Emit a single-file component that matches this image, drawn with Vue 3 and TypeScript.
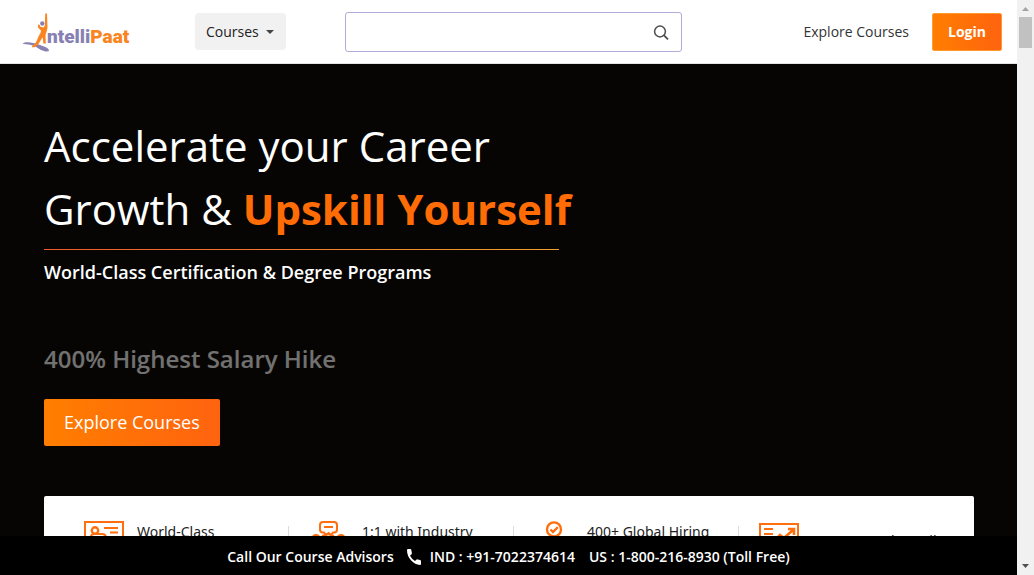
<script setup lang="ts">
import { ref } from 'vue'

interface Feature {
  icon: 'instructor' | 'mentor' | 'hiring' | 'growth'
  text: string
}

const query = ref('')

const features: Feature[] = [
  { icon: 'instructor', text: 'World-Class' },
  { icon: 'mentor', text: '1:1 with Industry' },
  { icon: 'hiring', text: '400+ Global Hiring' },
  { icon: 'growth', text: '55% Avg. Salary Hike' },
]
</script>

<template>
  <div class="viewport">
    <div class="page">
      <header class="topbar">
        <a href="#" class="logo" aria-label="IntelliPaat">
          <svg class="logo-art" width="110" height="42" viewBox="0 0 110 42">
            <path d="M0.500 32.500C4 30.300 11 31.600 16.500 33.600C21 35.200 26 36.500 27 39.200C27.300 41 22.500 40.600 19 38.900C15.500 37.100 13 34.800 9 34C5.500 33.300 2.500 33.400 0.500 32.500Z" fill="#8781b3" />
            <circle cx="20.300" cy="12.500" r="2.200" fill="#8781b3" />
            <path d="M23.200 2.500L25 2.500L25.500 16C25.300 19.500 24 21.500 23.500 24L23.800 32.500L21.300 32.500L20.800 26.500C18 29 17.800 33.500 12.500 36.300L9.800 36.200L10.300 34.700C15 32.800 15.500 26 18.400 22.200L19 19.500L15.800 16.300L16.300 13.300L17.800 14L18 15.400L21.500 16.400L22.900 14.500Z" fill="#f98420" />
            <text x="25" y="32" class="logo-text"><tspan fill="#8781b3">ntelli</tspan><tspan fill="#f98420">Paat</tspan></text>
          </svg>
        </a>
        <button type="button" class="courses">
          Courses
          <svg width="8" height="4" viewBox="0 0 8 4" aria-hidden="true"><path d="M0 0H8L4 4Z" fill="#444" /></svg>
        </button>
        <form class="search" role="search" @submit.prevent>
          <input v-model="query" type="text" aria-label="Search courses" />
          <button type="submit" aria-label="Search">
            <svg width="16" height="16" viewBox="0 0 16 16" fill="none" stroke="#4d4d4d" stroke-width="1.500">
              <circle cx="7" cy="7.500" r="5.400" />
              <path d="M11 11.400L15 15.400" stroke-width="1.800" />
            </svg>
          </button>
        </form>
        <a href="#" class="explore-link">Explore Courses</a>
        <button type="button" class="login">Login</button>
      </header>

      <main class="hero">
        <h1>Accelerate your Career<br />Growth &amp; <strong>Upskill Yourself</strong></h1>
        <div class="rule"></div>
        <h2>World-Class Certification &amp; Degree Programs</h2>
        <p class="stat">400% Highest Salary Hike</p>
        <a href="#" class="cta">Explore Courses</a>

        <ul class="features">
          <li v-for="f in features" :key="f.icon" :class="{ single: f.icon === 'growth' }">
            <svg v-if="f.icon === 'instructor'" width="40" height="40" viewBox="0 0 40 40" fill="none" stroke="#ff6f0f" stroke-width="2">
              <path d="M1 36V1H39V36Z" />
              <circle cx="11" cy="9.500" r="3.200" stroke-width="2.400" />
              <path d="M7 22V16Q7 13 10 13H18Q22 13 22 17V22M20 7H34M26 11.500H34M7 27H34" />
            </svg>
            <svg v-else-if="f.icon === 'mentor'" width="40" height="40" viewBox="0 0 40 40" fill="none" stroke="#ff6f0f" stroke-width="2">
              <path d="M14 1H25Q28 1 28 4V8.500Q28 11.500 25 11.500H24L22 14L19.500 12L17 14L15 11.500H14Q11 11.500 11 8.500V4Q11 1 14 1ZM15 6H24" />
              <circle cx="7" cy="18" r="4" />
              <circle cx="32" cy="18" r="4" />
              <path d="M13 15L19 13L25 15M2 36V30Q2 25 8 25Q14 25 14 30V36ZM26 36V30Q26 25 32 25Q38 25 38 30V36Z" />
            </svg>
            <svg v-else-if="f.icon === 'hiring'" width="40" height="40" viewBox="0 0 40 40" fill="none" stroke="#ff6f0f" stroke-width="2.400">
              <circle cx="20" cy="8.400" r="7" />
              <path d="M16.500 8.500L19 11L23.800 6.200M20 16V24M8 36V24H32V36" />
            </svg>
            <svg v-else width="40" height="34" viewBox="0 0 40 34" fill="none" stroke="#ff6f0f" stroke-width="2">
              <path d="M1 33V1H39V33Z M5 6H14M5 11H14M5 16H14" />
              <path d="M16 17L21 12L25 15L34 7M29 6H35V12" stroke-width="2.600" />
            </svg>
            <span>{{ f.text }}</span>
          </li>
        </ul>
      </main>

      <footer class="callbar">
        <span>Call Our Course Advisors</span>
        <svg width="14" height="16" viewBox="0 0 14 16" aria-hidden="true">
          <path d="M0 1Q0 0 1 0H3.300Q4.200 0 4.300 1L4.900 4.100Q5 4.800 4.500 5.200L3 6.800Q5 10.400 8 12L9.600 10.600Q10 10.200 10.700 10.400L13.200 11.100Q14 11.300 14 12.200V15Q14 16 13 16Q8 15.700 4.200 11.600Q0 7 0 1Z" fill="#fff" />
        </svg>
        <a href="tel:+917022374614">IND : +91-7022374614</a>
        <a href="tel:18002168930" class="us">US : 1-800-216-8930 (Toll Free)</a>
      </footer>
    </div>

    <div class="scrollbar" aria-hidden="true">
      <svg width="17" height="17" viewBox="0 0 17 17"><path d="M5 11H12L8.500 7Z" fill="#a3a3a3" /></svg>
      <div class="thumb"></div>
      <svg width="17" height="17" viewBox="0 0 17 17"><path d="M5 6H12L8.500 10Z" fill="#505050" /></svg>
    </div>
  </div>
</template>

<style>
body {
  margin: 0;
}
</style>

<style scoped>
* {
  box-sizing: border-box;
}
.viewport {
  display: flex;
  height: 100vh;
  overflow: hidden;
  font-family: "Open Sans", "Noto Sans", sans-serif;
  font-size: 14px;
}
.page {
  position: relative;
  flex: 1;
  min-width: 0;
  overflow: hidden;
  background: #060503;
}
a {
  text-decoration: none;
  color: inherit;
}
button,
input {
  font: inherit;
}
.topbar {
  display: flex;
  align-items: center;
  height: 64px;
  padding: 0 15px 0 22px;
  background: #fff;
  border-bottom: 1px solid #e5e5e5;
}
.logo,
.logo-art {
  display: block;
}
.logo-text {
  font-family: Roboto, "Liberation Sans", sans-serif;
  font-weight: 900;
  font-size: 19px;
}
.logo-art {
  overflow: visible;
}
.courses {
  display: flex;
  align-items: center;
  gap: 7px;
  height: 37px;
  margin-left: 63px;
  padding: 0 12px 0 11px;
  border: 0;
  border-radius: 4px;
  background: #f1f1f1;
  color: #222;
  font-weight: 500;
}
.search {
  display: flex;
  align-items: center;
  flex: 0 1 337px;
  height: 40px;
  margin-left: 59px;
  padding-right: 12px;
  border: 1px solid #b1abd9;
  border-radius: 3px;
}
.search input {
  flex: 1;
  min-width: 0;
  height: 100%;
  padding: 0 12px;
  border: 0;
  outline: 0;
  background: transparent;
}
.search button {
  display: flex;
  padding: 0;
  border: 0;
  background: none;
}
.explore-link {
  margin-left: auto;
  color: #333;
}
.login {
  height: 38px;
  margin-left: 23px;
  padding: 0 15px;
  border: 1px solid #ff9b2f;
  border-radius: 2px;
  background: linear-gradient(90deg, #ff7e00, #ff630f);
  color: #fff;
  font-weight: 700;
}
.hero {
  padding: 50px 43px 0 44px;
  color: #fff;
}
h1 {
  margin: 0;
  font-size: 42px;
  line-height: 63px;
  font-weight: 400;
}
h1 strong {
  font-weight: 700;
  color: #ff6c06;
}
.rule {
  width: 515px;
  max-width: 100%;
  height: 1px;
  margin-top: 9px;
  background: linear-gradient(90deg, #f0592b, #efa12f);
}
h2 {
  margin: 9px 0 0;
  font-size: 18px;
  line-height: 27px;
  font-weight: 600;
}
.stat {
  margin: 55px 0 0;
  font-size: 24px;
  line-height: 36px;
  font-weight: 600;
  opacity: 0.43;
}
.cta {
  display: block;
  width: fit-content;
  margin-top: 22px;
  padding: 10px 20px;
  border-radius: 2px;
  background: linear-gradient(90deg, #ff7e00, #ff630f);
  font-size: 18px;
  line-height: 27px;
}
.features {
  display: grid;
  grid-template-columns: repeat(4, 1fr);
  margin: 50px 0 0;
  padding: 25px 10px 24px 20px;
  list-style: none;
  border-radius: 2px;
  background: #fff;
  color: #222;
  font-family: "Noto Sans", "Open Sans", sans-serif;
}
.features li {
  position: relative;
  display: flex;
  align-items: flex-start;
  gap: 13px;
  min-height: 40px;
  padding-left: 20px;
  line-height: 21px;
}
.features li.single {
  align-items: center;
  padding-bottom: 2px;
}
.features li svg {
  flex: none;
}
.features li + li::before {
  content: "";
  position: absolute;
  left: -1px;
  top: 5px;
  bottom: 5px;
  width: 1px;
  background: #ddd;
}
.callbar {
  position: absolute;
  left: 0;
  right: 0;
  bottom: 0;
  display: flex;
  align-items: center;
  justify-content: center;
  height: 39px;
  padding-top: 2px;
  background: #000;
  color: #fff;
  font-weight: 600;
}
.callbar svg {
  margin: 0 9px 0 13px;
}
.callbar .us {
  margin-left: 14px;
}
.scrollbar {
  display: flex;
  flex-direction: column;
  width: 17px;
  background: #f1f1f1;
}
.thumb {
  height: 31px;
  margin: 0 2px auto;
  background: #c1c1c1;
}
</style>
